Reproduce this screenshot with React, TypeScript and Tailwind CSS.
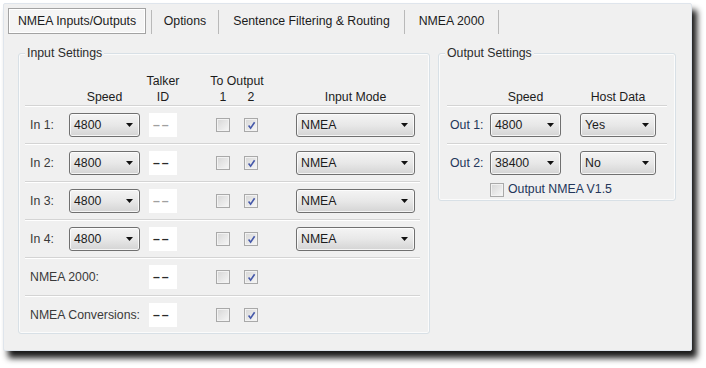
import React from "react";

const Combo = ({ value, w }: { value: string; w: string }) => (
  <div
    className={`${w} h-[24px] flex items-center justify-between rounded-[3px] border border-[#707070] bg-linear-to-b from-[#f4f4f4] via-[#e8e8e8] to-[#d4d4d4] pl-[4px] pr-[6px] text-[#1c1c1c] shadow-[inset_0_0_0_1px_rgba(255,255,255,0.75)]`}
  >
    <span>{value}</span>
    <svg width="7" height="4" viewBox="0 0 7 4">
      <path d="M0 0h7L3.5 4z" fill="#111" />
    </svg>
  </div>
);

const Check = ({ on }: { on?: boolean }) => (
  <span className="w-[14px] h-[14px] shrink-0 flex items-center justify-center border border-[#a9a9a9] bg-linear-to-br from-[#d6d6d6] to-[#f7f7f7] shadow-[inset_0_0_0_1px_#f2f2f2]">
    {on && (
      <svg width="9" height="9" viewBox="0 0 9 9">
        <path d="M1.6 4.6 L3.6 7.2 L7.6 1.2" stroke="#4659aa" strokeWidth="1.6" fill="none" />
      </svg>
    )}
  </span>
);

const Talker = ({ dim }: { dim?: boolean }) => (
  <div
    className={`w-[28px] h-[24px] flex items-center pl-[4px] bg-white tracking-[2px] font-bold ${
      dim ? "text-[#a0a0a0]" : "text-[#2a2a2a]"
    }`}
  >
    ––
  </div>
);

const Divider = () => <div className="h-[2px] border-t border-[#d4d4d4] bg-white" />;

const Group = ({
  title,
  w,
  h,
  children,
}: {
  title: string;
  w: string;
  h: string;
  children: React.ReactNode;
}) => (
  <div className={`relative ${w} ${h} rounded-[3px] border border-[#d8e0e6] shadow-[inset_0_0_0_1px_#fbfbfb]`}>
    <span className="absolute -top-[8px] left-[6px] px-[2px] bg-[#f0f0f0] leading-[15px] text-[#2c2c2c]">
      {title}
    </span>
    {children}
  </div>
);

const inputs = [
  { label: "In 1:", dim: true },
  { label: "In 2:", dim: false },
  { label: "In 3:", dim: true },
  { label: "In 4:", dim: false },
];

const tabs = [
  { name: "Options", w: "w-[66px]" },
  { name: "Sentence Filtering & Routing", w: "w-[185px]" },
  { name: "NMEA 2000", w: "w-[93px]" },
];

export default function App() {
  return (
    <div className="w-[706px] h-[368px] bg-white pl-[3px] pt-[3px] font-['Liberation_Sans',Arial,sans-serif] text-[12.3px] text-[#1c1c1c]">
      <div className="w-[689px] h-[348px] rounded-[2px] border border-[#dfe5ec] bg-[#f0f0f0] shadow-[5px_7px_6px_rgba(0,0,0,0.9)]">
        {/* tab strip */}
        <div className="flex items-stretch ml-[4px] mt-[4px] h-[26px]">
          <div className="w-[138px] flex items-center justify-center border border-[#a3a3a3] bg-[#f5f5f5] shadow-[inset_0_0_0_1px_#ffffff]">
            NMEA Inputs/Outputs
          </div>
          <div className="ml-[5px] mt-[2px] w-px bg-[#b9b9b9]" />
          {tabs.map((t) => (
            <React.Fragment key={t.name}>
              <div className={`${t.w} flex items-center justify-center whitespace-nowrap`}>{t.name}</div>
              <div className="mt-[2px] w-px bg-[#b9b9b9]" />
            </React.Fragment>
          ))}
        </div>

        <div className="flex items-start mt-[19px] pl-[14px]">
          {/* input settings */}
          <Group title="Input Settings" w="w-[412px]" h="h-[281px]">
            <div className="ml-[6px] mr-[9px]">
              <div className="h-[51px] flex items-end pl-[5px] leading-[16px]">
                <div className="w-[39px]" />
                <div className="w-[71px] text-center">Speed</div>
                <div className="ml-[9px] w-[28px] flex flex-col items-center whitespace-nowrap">
                  <span>Talker</span>
                  <span>ID</span>
                </div>
                <div className="ml-[39px] w-[42px] flex flex-col items-center whitespace-nowrap">
                  <span>To Output</span>
                  <div className="w-[42px] flex justify-between">
                    <span className="w-[14px] text-center">1</span>
                    <span className="w-[14px] text-center">2</span>
                  </div>
                </div>
                <div className="ml-[38px] w-[119px] text-center">Input Mode</div>
              </div>
              <Divider />
              {inputs.map((r) => (
                <React.Fragment key={r.label}>
                  <div className="h-[36px] flex items-center pl-[5px]">
                    <span className="w-[39px] text-[#3a3a3a]">{r.label}</span>
                    <Combo value="4800" w="w-[71px]" />
                    <div className="ml-[9px]">
                      <Talker dim={r.dim} />
                    </div>
                    <div className="ml-[39px]">
                      <Check />
                    </div>
                    <div className="ml-[14px]">
                      <Check on />
                    </div>
                    <div className="ml-[38px]">
                      <Combo value="NMEA" w="w-[119px]" />
                    </div>
                  </div>
                  <Divider />
                </React.Fragment>
              ))}
              {["NMEA 2000:", "NMEA Conversions:"].map((l, i) => (
                <React.Fragment key={l}>
                  <div className="h-[36px] flex items-center pl-[5px]">
                    <span className="w-[110px] whitespace-nowrap text-[#3a3a3a]">{l}</span>
                    <div className="ml-[9px]">
                      <Talker />
                    </div>
                    <div className="ml-[39px]">
                      <Check />
                    </div>
                    <div className="ml-[14px]">
                      <Check on />
                    </div>
                  </div>
                  {i === 0 && <Divider />}
                </React.Fragment>
              ))}
            </div>
          </Group>

          {/* output settings */}
          <div className="ml-[8px]">
            <Group title="Output Settings" w="w-[238px]" h="h-[148px]">
              <div className="mx-[8px]">
                <div className="h-[51px] flex items-end pl-[3px] leading-[16px]">
                  <div className="w-[40px]" />
                  <div className="w-[71px] text-center">Speed</div>
                  <div className="ml-[19px] w-[76px] text-center">Host Data</div>
                </div>
                <Divider />
                <div className="h-[36px] flex items-center pl-[3px]">
                  <span className="w-[40px] text-[#23365a]">Out 1:</span>
                  <Combo value="4800" w="w-[71px]" />
                  <div className="ml-[19px]">
                    <Combo value="Yes" w="w-[76px]" />
                  </div>
                </div>
                <Divider />
                <div className="h-[36px] flex items-center pl-[3px]">
                  <span className="w-[40px] text-[#23365a]">Out 2:</span>
                  <Combo value="38400" w="w-[71px]" />
                  <div className="ml-[19px]">
                    <Combo value="No" w="w-[76px]" />
                  </div>
                </div>
                <div className="mt-[1px] h-[16px] flex items-center pl-[43px]">
                  <Check />
                  <span className="ml-[4px] -mt-[2px] text-[#23365a]">Output NMEA V1.5</span>
                </div>
              </div>
            </Group>
          </div>
        </div>
      </div>
    </div>
  );
}
